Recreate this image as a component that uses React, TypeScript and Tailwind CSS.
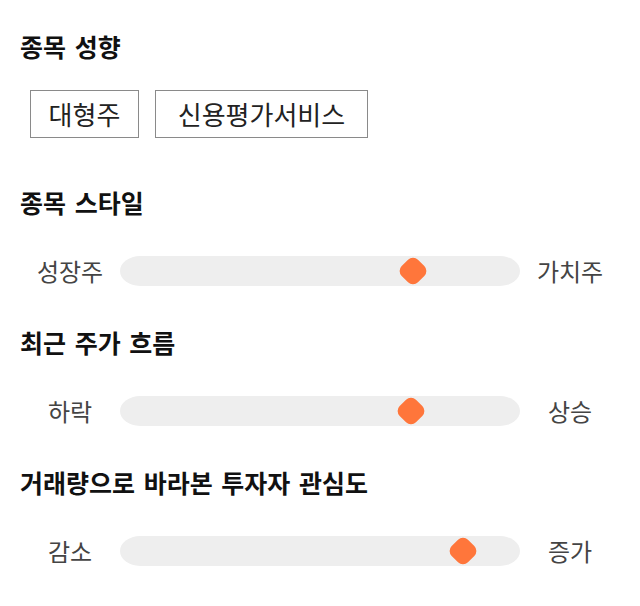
const font = { fontFamily: '"Noto Sans CJK KR", "Noto Sans", sans-serif' };

type SliderProps = {
  left: string;
  right: string;
  value: number;
};

function StyleSlider({ left, right, value }: SliderProps) {
  return (
    <div className="grid grid-cols-[100px_1fr_100px] items-center h-[30px]">
      <span className="text-center text-[24px] leading-[30px] text-[#444]">{left}</span>
      <div className="relative h-[30px] rounded-[20px/15px] bg-[#eeeeee]">
        <div
          className="absolute top-1/2 w-[23px] h-[23px] -translate-x-1/2 -translate-y-1/2 rotate-45 rounded-[7px] bg-[#ff763b]"
          style={{ left: `${value}%` }}
        />
      </div>
      <span className="text-center text-[24px] leading-[30px] text-[#444]">{right}</span>
    </div>
  );
}

function Heading({ children }: { children: string }) {
  return (
    <h2 className="text-[25px] leading-[32px] font-bold text-[#111] [word-spacing:3px]">
      {children}
    </h2>
  );
}

export default function App() {
  const tags = [
    { label: '대형주', width: 'w-[109px]' },
    { label: '신용평가서비스', width: 'w-[213px]' },
  ];

  return (
    <div className="w-[640px] min-h-[606px] bg-white px-[20px] pt-[30px]" style={font}>
      <Heading>종목 성향</Heading>
      <div className="flex gap-[16px] mt-[28px] ml-[10px]">
        {tags.map((tag) => (
          <span
            key={tag.label}
            className={`${tag.width} h-[48px] flex items-center justify-center border border-[#8a8a8a] text-[26px] leading-[46px] text-[#222]`}
          >
            {tag.label}
          </span>
        ))}
      </div>

      <div className="mt-[48px]">
        <Heading>종목 스타일</Heading>
      </div>
      <div className="mt-[38px]">
        <StyleSlider left="성장주" right="가치주" value={73.3} />
      </div>

      <div className="mt-[40px]">
        <Heading>최근 주가 흐름</Heading>
      </div>
      <div className="mt-[38px]">
        <StyleSlider left="하락" right="상승" value={72.8} />
      </div>

      <div className="mt-[40px]">
        <Heading>거래량으로 바라본 투자자 관심도</Heading>
      </div>
      <div className="mt-[38px]">
        <StyleSlider left="감소" right="증가" value={85.8} />
      </div>
    </div>
  );
}
